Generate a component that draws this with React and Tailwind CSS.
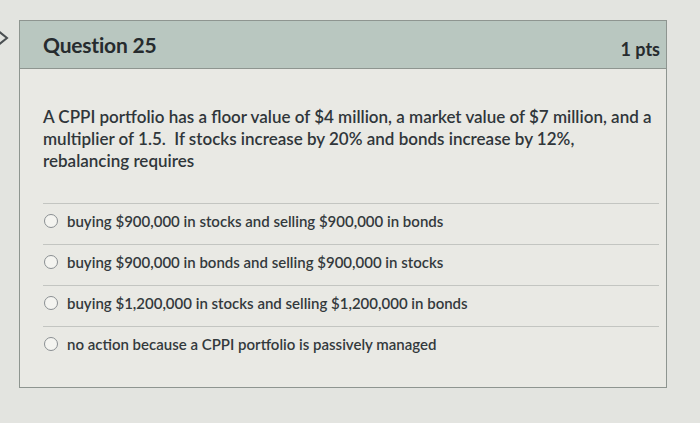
import React from 'react';

const options = [
  'buying $900,000 in stocks and selling $900,000 in bonds',
  'buying $900,000 in bonds and selling $900,000 in stocks',
  'buying $1,200,000 in stocks and selling $1,200,000 in bonds',
  'no action because a CPPI portfolio is passively managed',
];

export default function App() {
  return (
    <div
      className="relative w-[700px] h-[423px] overflow-hidden bg-[#e3e4e0] text-[#2f3437]"
      style={{ fontFamily: 'Lato, "Open Sans", sans-serif' }}
    >
      {/* collapse chevron at the left edge */}
      <svg className="absolute left-0 top-[28px]" width="12" height="20" viewBox="0 0 12 20">
        <polyline points="-3,2 7,10 -3,18" fill="none" stroke="#4a4f52" strokeWidth="2" />
      </svg>

      <div className="ml-[19px] mt-[20px] w-[648px] h-[368px] border border-[#8e9590] bg-[#e9e9e4] flex flex-col">
        <div className="h-[48px] shrink-0 flex items-center justify-between pl-[23px] pr-[6px] bg-[#b9c7c0] border-b border-[#8e9590]">
          <span className="text-[21px] font-bold tracking-[-0.2px] text-[#262b2e]">Question 25</span>
          <span className="text-[18px] font-bold mt-[10px] text-[#262b2e]">1 pts</span>
        </div>

        <div className="pl-[23px] pr-[7px] pt-[37px]">
          <p className="text-[17px] leading-[22px] font-semibold text-[#30363a]">
            A CPPI portfolio has a floor value of $4 million, a market value of $7 million, and a
            <br />
            multiplier of 1.5.&nbsp; If stocks increase by 20% and bonds increase by 12%,
            <br />
            rebalancing requires
          </p>

          <div className="mt-[31px]">
            {options.map((o) => (
              <div
                key={o}
                className="flex items-center h-[41px] pb-[6px] border-t border-[#c3c5c1]"
              >
                <span className="ml-[1px] w-[14px] h-[14px] rounded-full border-[1.5px] border-[#8a8f92] bg-[#f4f4f0] shrink-0" />
                <span className="ml-[9px] text-[15px] font-semibold text-[#33393c]">{o}</span>
              </div>
            ))}
          </div>
        </div>
      </div>
    </div>
  );
}
